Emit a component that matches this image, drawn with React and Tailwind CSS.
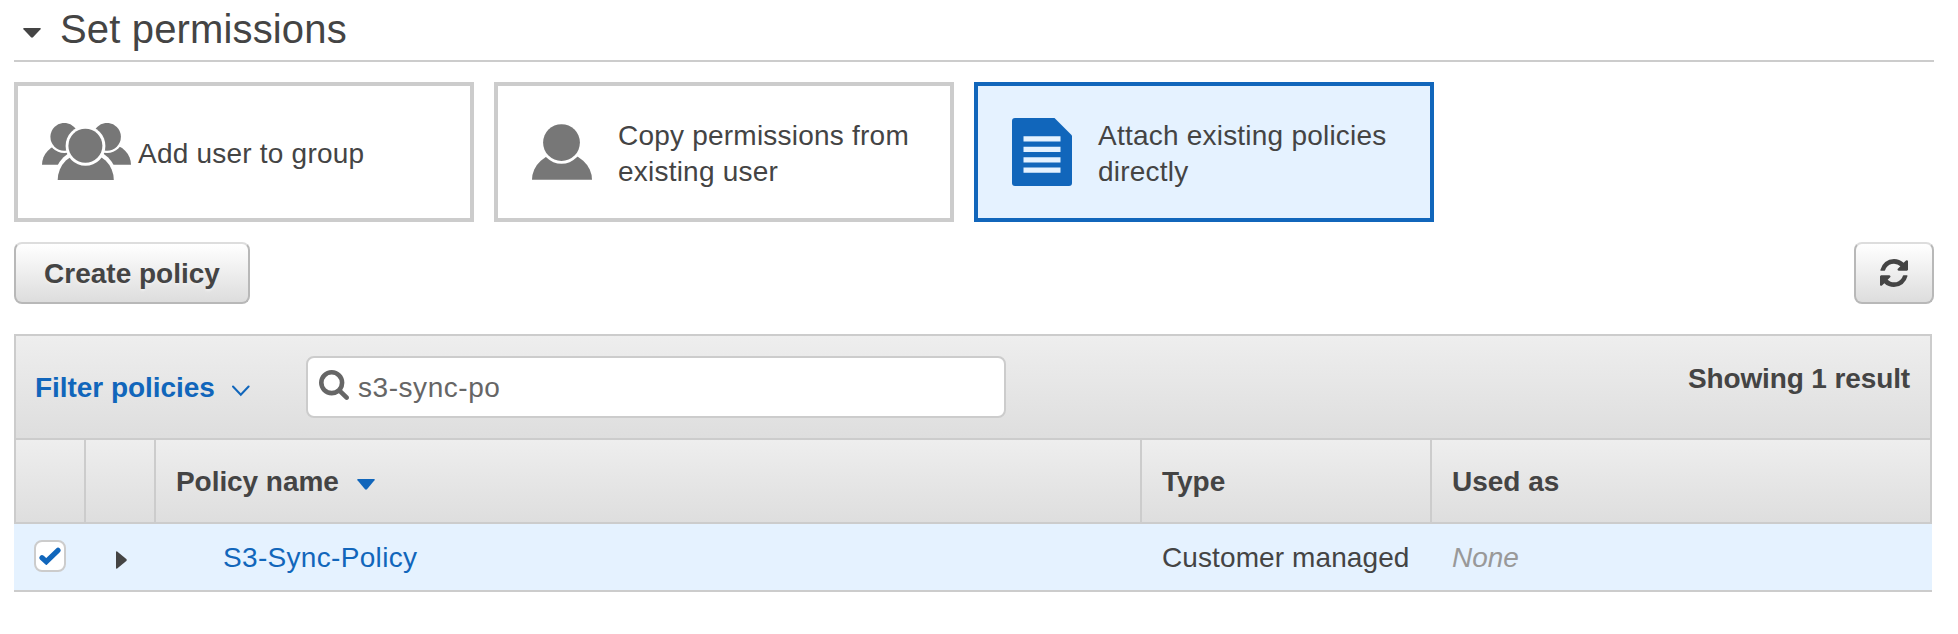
const REFRESH =
  'M1511 928q0 5-1 7-64 268-268 434.5t-478 166.5q-146 0-282.5-55t-243.5-157l-129 129q-19 19-45 19t-45-19-19-45v-448q0-26 19-45t45-19h448q26 0 45 19t19 45-19 45l-137 137q71 66 161 102t187 36q134 0 250-65t186-179q11-17 53-117 8-23 30-23h192q13 0 22.5 9.5t9.5 22.5zm25-800v448q0 26-19 45t-45 19h-448q-26 0-45-19t-19-45 19-45l138-138q-148-137-349-137-134 0-250 65t-186 179q-11 17-53 117-8 23-30 23h-199q-13 0-22.5-9.5t-9.5-22.5v-7q65-268 270-434.5t480-166.5q146 0 284 55.5t245 156.5l130-129q19-19 45-19t45 19 19 45z';
const SEARCH =
  'M1152 704q0-185-131.5-316.5t-316.5-131.5-316.5 131.5-131.5 316.5 131.5 316.5 316.5 131.5 316.5-131.5 131.5-316.5zm512 832q0 52-38 90t-90 38q-54 0-90-38l-343-342q-179 124-399 124-143 0-273.5-55.5t-225-150-150-225-55.5-273.5 55.5-273.5 150-225 225-150 273.5-55.5 273.5 55.5 225 150 150 225 55.5 273.5q0 220-124 399l343 343q37 37 37 90z';

function GroupIcon() {
  return (
    <svg className="ml-6 h-[58px] w-[90px] shrink-0" viewBox="42 123 90 58">
      <defs>
        <mask id="front" maskUnits="userSpaceOnUse" x="40" y="120" width="94" height="62">
          <rect x="40" y="120" width="94" height="62" fill="#fff" />
          <circle cx="85.5" cy="145.9" r="19.9" fill="#000" />
          <circle cx="85.7" cy="180" r="31.8" fill="#000" />
        </mask>
        <mask id="heads" maskUnits="userSpaceOnUse" x="40" y="120" width="94" height="62">
          <rect x="40" y="120" width="94" height="62" fill="#fff" />
          <circle cx="64.3" cy="136.7" r="16.3" fill="#000" />
          <circle cx="107" cy="136.7" r="16.3" fill="#000" />
        </mask>
        <mask id="mid" maskUnits="userSpaceOnUse" x="40" y="120" width="94" height="62">
          <rect x="40" y="120" width="94" height="62" fill="#fff" />
          <circle cx="85.5" cy="145.9" r="19.9" fill="#000" />
        </mask>
      </defs>
      <g fill="#777">
        <g mask="url(#front)">
          <circle cx="64.3" cy="136.8" r="13.9" />
          <circle cx="107" cy="136.8" r="13.9" />
          <g mask="url(#heads)">
            <path d="M42 164.8a20 20 0 0 1 40 0z" />
            <path d="M91 164.8a20 20 0 0 1 40 0z" />
          </g>
        </g>
        <circle cx="85.4" cy="145.8" r="17" />
        <path d="M57.7 180a28 27.4 0 0 1 56.1 0z" mask="url(#mid)" />
      </g>
    </svg>
  );
}

function UserIcon() {
  return (
    <svg className="ml-[34px] h-[56px] w-[60px] shrink-0" viewBox="0 0 60 56">
      <defs>
        <mask id="neck">
          <rect width="60" height="56" fill="#fff" />
          <circle cx="29.5" cy="18.6" r="21.2" fill="#000" />
        </mask>
      </defs>
      <circle cx="29.5" cy="18.6" r="18.4" fill="#777" />
      <path d="M0 55.8a30 27 0 0 1 60 0z" fill="#777" mask="url(#neck)" />
    </svg>
  );
}

function PolicyIcon() {
  return (
    <svg className="ml-[34px] h-[68px] w-[60px] shrink-0" viewBox="0 0 60 68">
      <path d="M3 0H42.5L60 17.6V65a3 3 0 0 1-3 3H3a3 3 0 0 1-3-3V3a3 3 0 0 1 3-3z" fill="#1166bb" />
      <path d="M11.5 18.2h37v5.400h-37zM11.5 28.8h37v5.200h-37zM11.5 39.2h37v5.300h-37zM11.5 49.5h37v5.300h-37z" fill="#e5f2ff" />
    </svg>
  );
}

function OptionCard({ icon, textClass, selected, children }) {
  return (
    <div
      className={
        'flex h-[140px] w-[460px] items-center border-4 ' +
        (selected ? 'border-[#1166bb] bg-[#e5f2ff]' : 'border-[#ccc] bg-white')
      }
    >
      {icon}
      <div className={'whitespace-nowrap leading-9 tracking-[0.22px] ' + textClass}>{children}</div>
    </div>
  );
}

export default function App() {
  return (
    <div className="h-[634px] w-[1958px] overflow-hidden bg-white pl-3.5 font-['Liberation_Sans',Arial,sans-serif] text-[28px] leading-9 text-[#444]">
      <header className="flex h-[62px] w-[1920px] items-center border-b-2 border-[#ccc]">
        <svg className="mt-[6px] ml-[9px] h-[10px] w-[18px]" viewBox="0 0 18 10">
          <path d="M1 0h16q1.300 .2 .5 1.200L10 9.300q-1 .9-2 0L.5 1.200Q-.3 .2 1 0z" fill="#444" />
        </svg>
        <h1 className="mb-[2px] ml-[19px] text-[40px] leading-[46px] tracking-[0.15px]">Set permissions</h1>
      </header>

      <div className="mt-5 flex gap-5">
        <OptionCard icon={<GroupIcon />} textClass="ml-1.5 pt-1">
          Add user to group
        </OptionCard>
        <OptionCard icon={<UserIcon />} textClass="ml-[26px] pt-[3px]">
          Copy permissions from
          <br />
          existing user
        </OptionCard>
        <OptionCard selected icon={<PolicyIcon />} textClass="ml-[26px] pt-[3px]">
          Attach existing policies
          <br />
          directly
        </OptionCard>
      </div>

      <div className="mt-5 flex w-[1920px] justify-between">
        <button className="h-[62px] w-[236px] rounded-lg border-2 border-[#b8b8b8] border-t-[#ddd] bg-linear-to-b from-white to-[#ddd] pt-[2px] font-bold text-shadow-[0_2px_2px_#eee]">
          Create policy
        </button>
        <button className="flex h-[62px] w-20 items-center justify-center rounded-lg border-2 border-[#b8b8b8] border-t-[#ddd] bg-linear-to-b from-white to-[#ddd]">
          <svg className="h-7 w-7" viewBox="0 0 1536 1536">
            <path d={REFRESH} fill="#444" />
          </svg>
        </button>
      </div>

      <section className="mt-[30px] w-[1918px]">
        <div className="flex h-[106px] border-2 border-[#ccc] bg-linear-to-b from-[#eee] to-[#dedede]">
          <div className="flex w-[290px] items-center pt-[2px] pl-[19px] font-bold text-[#1166bb]">
            <span className="tracking-[-0.05px]">Filter policies</span>
            <svg className="mt-[5px] ml-[17px] h-3 w-[18px]" viewBox="0 0 18 12">
              <path d="M1 1.500L8.800 9.700L16.600 1.500" fill="none" stroke="#1166bb" strokeWidth="2" strokeLinecap="round" />
            </svg>
          </div>
          <div className="mt-5 flex h-[62px] w-[700px] items-center rounded-lg border-2 border-[#ccc] bg-white text-[#666]">
            <svg className="mb-1 ml-[11px] h-[30px] w-[30px]" viewBox="0 0 1664 1664">
              <path d={SEARCH} fill="#666" />
            </svg>
            <span className="ml-[9px] pt-[2px] tracking-[0.55px]">s3-sync-po</span>
          </div>
          <div className="mt-[25px] ml-auto pr-5 font-bold tracking-[-0.12px]">Showing 1 result</div>
        </div>

        <div className="flex h-[84px] border-x-2 border-b-2 border-[#ccc] bg-linear-to-b from-[#eee] to-[#dedede] font-bold">
          <div className="w-[70px] border-r-2 border-[#ccc]" />
          <div className="w-[70px] border-r-2 border-[#ccc]" />
          <div className="flex w-[986px] items-center border-r-2 border-[#ccc] pt-[2px] pl-5">
            <span className="tracking-[-0.06px]">Policy name</span>
            <svg className="mt-[5px] ml-[18px] h-[11px] w-[18px]" viewBox="0 0 18 11">
              <path d="M1 0h16q1.300 .2 .5 1.200L10 10.300q-1 .9-2 0L.5 1.200Q-.3 .2 1 0z" fill="#1166bb" />
            </svg>
          </div>
          <div className="flex w-[290px] items-center border-r-2 border-[#ccc] pt-[2px] pl-5">Type</div>
          <div className="flex items-center pt-[2px] pl-5">Used as</div>
        </div>

        <div className="flex h-[68px] items-center border-b-2 border-[#ccc] bg-[#e5f2ff]">
          <div className="w-[72px] pl-5">
            <div className="mb-[2px] flex h-8 w-8 items-center justify-center rounded-lg border-2 border-[#ccc] bg-white">
              <svg className="h-[18px] w-[22px]" viewBox="0 0 22 18">
                <path d="M3 10.800L7.300 14.700L19 3.300" fill="none" stroke="#1166bb" strokeWidth="5.200" strokeLinecap="round" />
              </svg>
            </div>
          </div>
          <div className="w-[70px] pl-[30px]">
            <svg className="mt-[6px] h-[18px] w-[11px]" viewBox="0 0 11 18">
              <path d="M0 1q.2-1.300 1.200-.5L10.300 8q.9 1 0 2L1.200 17.500Q.2 18.300 0 17z" fill="#444" />
            </svg>
          </div>
          <div className="w-[986px] pt-[2px] pl-[67px] tracking-[0.32px] text-[#1166bb]">S3-Sync-Policy</div>
          <div className="w-[290px] pt-[2px] pl-5 tracking-[0.1px]">Customer managed</div>
          <div className="pt-[2px] pl-5 text-[#999] italic">None</div>
        </div>
      </section>
    </div>
  );
}
